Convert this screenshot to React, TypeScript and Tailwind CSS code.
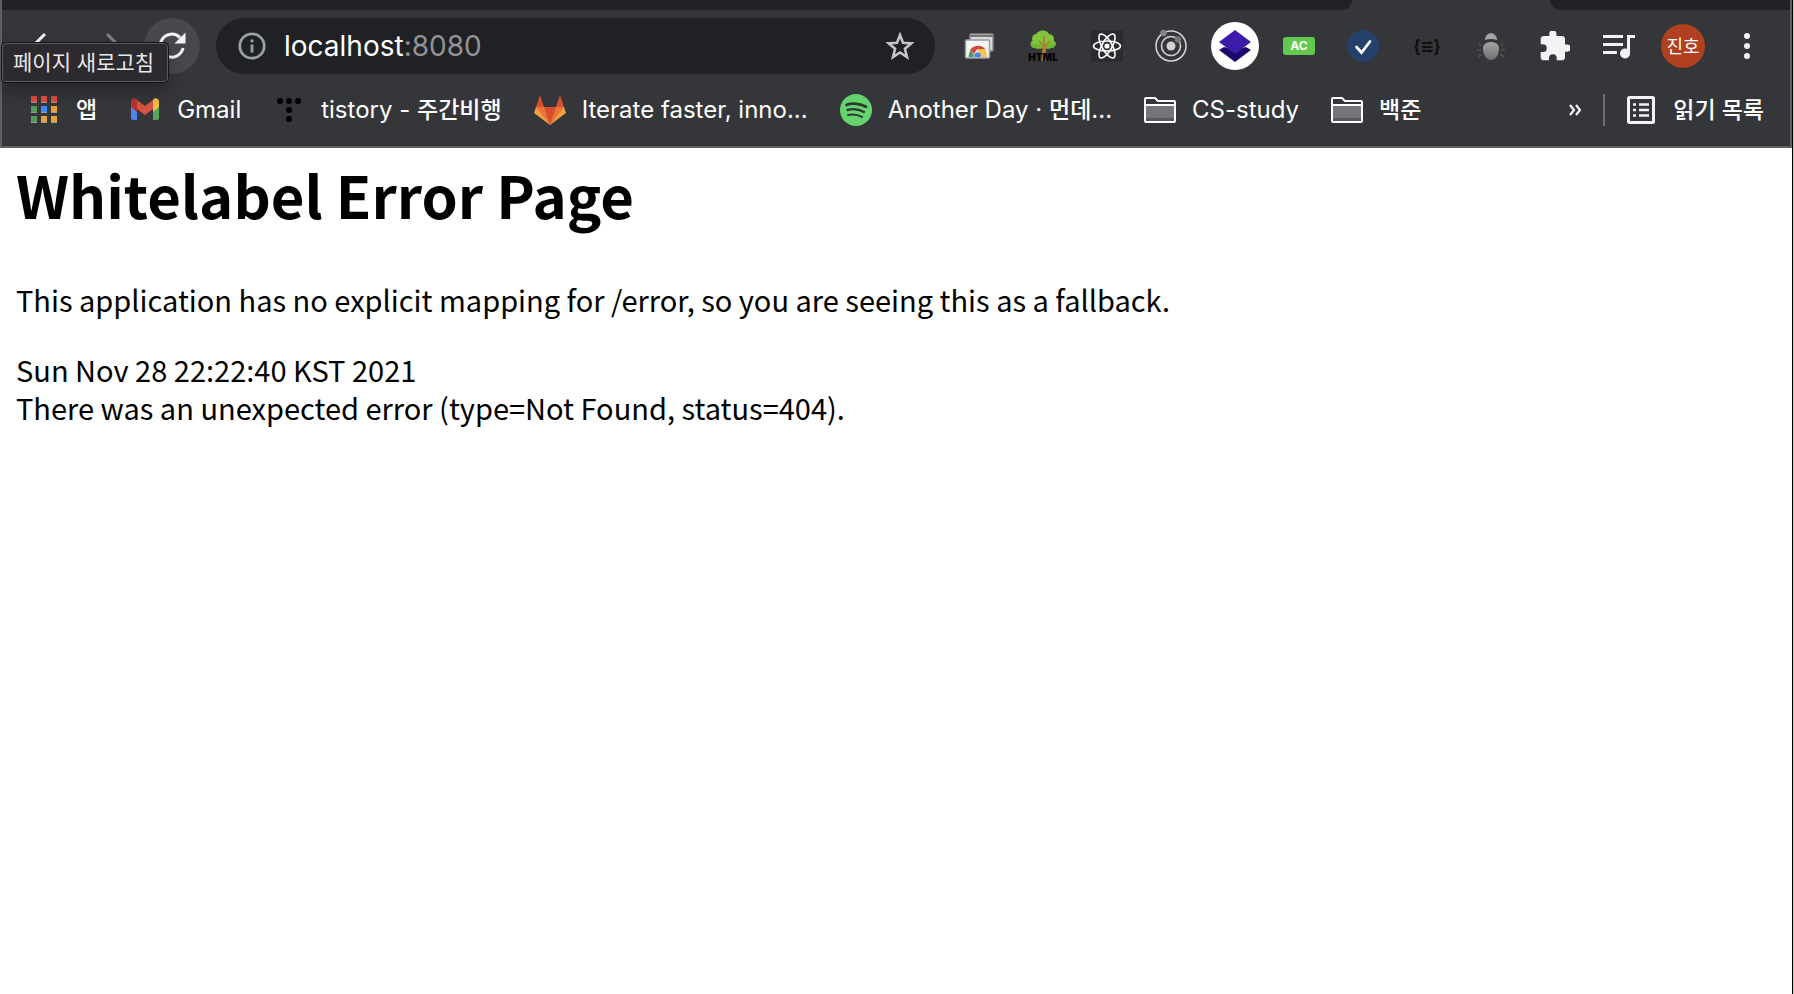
import { type ReactNode } from "react";

function Reload() {
  return (
    <svg viewBox="0 0 28 28" className="size-7" fill="none" stroke="#f1f3f4" strokeWidth="3">
      <path d="M25 16 A11.5 11.5 0 1 1 22 5.6" />
      <path d="M27.500 .5V11.500H16.500z" fill="#f1f3f4" stroke="none" />
    </svg>
  );
}

function Star() {
  return (
    <svg viewBox="0 0 30 30" className="size-[30px]" fill="none" stroke="#c4c5c8" strokeWidth="2.6">
      <path d="M15 4l3 7.800 8.300.6-6.400 5.300 2.100 8.300-7-4.500-7 4.500 2.100-8.300-6.400-5.300 8.300-.6z" />
    </svg>
  );
}

function Apps() {
  const colors = ["#e04a3f", "#e04a3f", "#e04a3f", "#4f9a5c", "#3f86f4", "#e5a336", "#4f9a5c", "#e5a336", "#e5a336"];
  return (
    <svg viewBox="0 0 26 28" className="h-7 w-[26px]">
      {colors.map((c, i) => (
        <g key={i}>
          <rect x={(i % 3) * 10} y={Math.floor(i / 3) * 10 + 1} width="6" height="6" fill="#9a9a9a" />
          <rect x={(i % 3) * 10} y={Math.floor(i / 3) * 10} width="6" height="6" fill={c} />
        </g>
      ))}
    </svg>
  );
}

function Gmail() {
  return (
    <svg viewBox="0 0 30 24" className="h-6 w-[30px]">
      <path d="M1 8v12a2 2 0 0 0 2 2h4V12z" fill="#4f86ec" />
      <path d="M29 8v12a2 2 0 0 1-2 2h-4V12z" fill="#58a65c" />
      <path d="M7 5v9L1 9V4C1 0 4.500-.5 7 1.500z" fill="#b5332a" />
      <path d="M23 5v9l6-5V4c0-4-3.500-4.500-6-2.500z" fill="#f1bc42" />
      <path d="M7 2l8 6 8-6v9l-8 6-8-6z" fill="#d95140" />
    </svg>
  );
}

function Tistory() {
  return (
    <svg viewBox="0 0 24 24" className="size-6" fill="#000">
      <circle cx="3" cy="3" r="3" />
      <circle cx="12" cy="3" r="3" />
      <circle cx="21" cy="3" r="3" />
      <circle cx="12" cy="12" r="3" />
      <circle cx="12" cy="21" r="3" />
    </svg>
  );
}

function Gitlab() {
  return (
    <svg viewBox="0 0 32 30" className="h-[30px] w-8">
      <path d="M16 30L0 18 2 12h28l2 6z" fill="#efa141" />
      <path d="M2 12h28L16 30z" fill="#ec7339" />
      <path d="M10 12h12l-6 18zM6 0l4 12H2zM26 0l4 12h-8z" fill="#d6502f" />
    </svg>
  );
}

function Spotify() {
  return (
    <svg viewBox="0 0 32 32" className="size-8" fill="none" stroke="#2d3a33" strokeLinecap="round">
      <circle cx="16" cy="16" r="16" fill="#65d46e" stroke="none" />
      <path d="M6.500 10.800c6-2 14-1.300 19.500 2" strokeWidth="2.800" />
      <path d="M7.500 16c5-1.500 11.500-.8 16.500 2" strokeWidth="2.400" />
      <path d="M8 21c5-1.200 9.500-.6 14 1.900" strokeWidth="2" />
    </svg>
  );
}

function Folder() {
  return (
    <svg viewBox="0 0 32 26" className="h-[26px] w-8">
      <path d="M1 8h30v16H1z" fill="#757679" />
      <path d="M2 21h28v3H2z" fill="#58595c" />
      <path d="M1 2a1 1 0 0 1 1-1h9l3 3h16a1 1 0 0 1 1 1v19a1 1 0 0 1-1 1H2a1 1 0 0 1-1-1zM1 8h30" fill="none" stroke="#fff" strokeWidth="2" />
    </svg>
  );
}

function ReadingList() {
  return (
    <svg viewBox="0 0 28 28" className="size-7" fill="none" stroke="#f1f3f4" strokeWidth="3">
      <rect x="1.500" y="1.500" width="25" height="25" rx="1" />
      <path d="M6 8.500h3M12 8.500h10M6 14h3M12 14h10M6 19.500h3M12 19.500h10" strokeWidth="2.600" />
    </svg>
  );
}

function Screens() {
  return (
    <svg viewBox="0 0 32 32" className="size-8">
      <rect x="7" y="4" width="23" height="17" rx="1" fill="#d9d9d9" stroke="#8b8b8b" strokeWidth="1.500" />
      <path d="M7 6h23" stroke="#777" strokeWidth="2" />
      <rect x="2.500" y="10" width="24" height="18" rx="1" fill="#f5f5f5" stroke="#9b9b9b" strokeWidth="1.500" />
      <path d="M5.500 27a9 11 0 0 1 2-7l5 7z" fill="#4a9f57" />
      <path d="M7 20c4-6 13-5 15.500-.5H14L11 24z" fill="#d0493c" />
      <path d="M15 19.500h7.500a11 11 0 0 1 1 7.500H16z" fill="#f3c74b" />
      <path d="M10.500 27a4 4 0 1 1 8 0z" fill="#fff" />
      <path d="M11.500 27a3.400 3.400 0 1 1 6.200 0z" fill="#4b83e8" />
    </svg>
  );
}

function Tree() {
  return (
    <svg viewBox="0 0 32 32" className="size-8 overflow-visible">
      <path d="M8 18c-4 0-6-5-2.500-7.500C4 6 7.500 3.500 9.500 4 11-.5 20-1 22 4c4 0 6 4 4.500 6.500C31 13 28 18 24 18c-2 1-5 .5-8 0-3 .5-6 1-8 0z" fill="#83c43d" />
      <path d="M8 18c-4 0-5-3-4-5 5 2 20 2 24.500 0 .5 2-1 5-4.500 5-2 1-5 .5-8 0-3 .5-6 1-8 0z" fill="#6fb538" />
      <path d="M17 6v25M17 17l6-6M17 16l-5-5" stroke="#b27a35" strokeWidth="1.600" fill="none" />
      <path d="M15.500 15h3l1 16h-5z" fill="#b27a35" />
      <text x="16" y="31" textAnchor="middle" fontSize="10" className="font-['Inter'] font-black" fill="#000">HTML</text>
    </svg>
  );
}

function ReactMark() {
  return (
    <svg viewBox="0 0 32 32" className="size-8" fill="none" stroke="#fff" strokeWidth="1.600">
      <rect width="32" height="32" rx="2" fill="#2b2b30" stroke="none" />
      <ellipse cx="16" cy="16" rx="13.500" ry="5" />
      <ellipse cx="16" cy="16" rx="13.500" ry="5" transform="rotate(60 16 16)" />
      <ellipse cx="16" cy="16" rx="13.500" ry="5" transform="rotate(120 16 16)" />
      <circle cx="16" cy="16" r="2.600" fill="#fff" stroke="none" />
    </svg>
  );
}

function Orbit() {
  return (
    <svg viewBox="0 0 32 32" className="size-8 overflow-visible" fill="none" stroke="#d2d2d3" strokeWidth="1.600">
      <circle cx="16" cy="16" r="15" />
      <circle cx="16" cy="16" r="9.500" />
      <circle cx="16" cy="16" r="4.500" fill="#d2d2d3" stroke="none" />
      <circle cx="8.500" cy="3" r="3.200" fill="#858689" stroke="none" />
      <circle cx="23" cy="9.500" r="3.200" fill="#77787b" stroke="none" />
    </svg>
  );
}

function Layers() {
  return (
    <svg viewBox="0 0 48 48" className="size-12">
      <circle cx="24" cy="24" r="24" fill="#fff" />
      <path d="M8 28l5-3 11 3 11-3 5 3-16 12z" fill="#1d0a6b" />
      <path d="M24 8l16 12-16 12L8 20z" fill="#3d1ba8" />
    </svg>
  );
}

function Check() {
  return (
    <svg viewBox="0 0 32 32" className="size-8">
      <circle cx="16" cy="16" r="16" fill="#23416b" />
      <path d="M9.500 17l5 5.500L23 11.500" fill="none" stroke="#fff" strokeWidth="2.800" strokeLinecap="round" />
    </svg>
  );
}

function Braces() {
  return (
    <svg viewBox="0 0 32 32" className="size-8" fill="none" stroke="#111" strokeWidth="2.400">
      <path d="M8.500 10C5.500 10 6 11.500 6 13.500s-.5 3.500-2.500 3.500C5.500 17 6 18.500 6 20.500s-.5 3.500 2.500 3.500M23.500 10c3 0 2.500 1.500 2.500 3.500s.5 3.500 2.500 3.500C26.500 17 26 18.500 26 20.500s.5 3.500-2.500 3.500" />
      <path d="M11 13h10.500M11 17h10.500M11 21h10.500" strokeWidth="1.800" />
      <path d="M18.500 11.500v3M13.500 15.500v3M18.500 19.500v3" strokeWidth="2" />
    </svg>
  );
}

function Bug() {
  return (
    <svg viewBox="0 0 32 32" className="size-8">
      <defs>
        <linearGradient id="bug-shell" x1="0" y1="0" x2="0" y2="1">
          <stop offset="0" stopColor="#a4a4a4" />
          <stop offset="1" stopColor="#6e6e6e" />
        </linearGradient>
      </defs>
      <path d="M6.500 15.500H5L4 13.500M6 20H2M7 25H4.500l-1 2.500M25.500 15.500H27l1-2M26 20h4M25 25h2.500l1 2.500" stroke="#505154" strokeWidth="1.500" fill="none" />
      <path d="M10 10c0-9 12-9 12 0-4-1.500-8-1.500-12 0z" fill="#a5a5a5" />
      <path d="M8 18c0-8 16-8 16 0s-4 12-8 12-8-4-8-12z" fill="url(#bug-shell)" />
    </svg>
  );
}

function Puzzle() {
  return (
    <svg viewBox="1.500 1.500 21 21" className="size-[30px]" fill="#f1f3f4">
      <path d="M20.500 11H19V7c0-1.100-.9-2-2-2h-4V3.500a2.500 2.500 0 0 0-5 0V5H4c-1.100 0-2 .9-2 2v3.800h1.500a2.700 2.700 0 0 1 0 5.400H2V20c0 1.100.9 2 2 2h3.800v-1.500a2.700 2.700 0 0 1 5.400 0V22H17c1.100 0 2-.9 2-2v-4h1.500a2.500 2.500 0 0 0 0-5z" />
    </svg>
  );
}

function Queue() {
  return (
    <svg viewBox="0 0 32 26" className="h-[26px] w-8" fill="none" stroke="#f1f3f4" strokeWidth="3">
      <path d="M0 3.500h20M0 11.500h20M0 19.500h14" />
      <path d="M25.500 20V3.500H32" />
      <circle cx="22" cy="20.500" r="5" fill="#f1f3f4" stroke="none" />
    </svg>
  );
}

function Info() {
  return (
    <svg viewBox="0 0 28 28" className="size-7 shrink-0" fill="none" stroke="#9aa0a6" strokeWidth="2.800">
      <circle cx="14" cy="14" r="12.200" />
      <path d="M14 12.500v8M14 7.500v2.800" />
    </svg>
  );
}

function Extension({ label, children }: { label: string; children: ReactNode }) {
  return (
    <button type="button" aria-label={label} className="flex h-12 w-16 shrink-0 items-center justify-center">
      {children}
    </button>
  );
}

function Bookmark({ icon, children }: { icon: ReactNode; children: ReactNode }) {
  return (
    <a href="#" className="flex h-14 shrink-0 items-center gap-4 whitespace-nowrap">
      <span className="flex w-8 justify-center">{icon}</span>
      <span>{children}</span>
    </a>
  );
}

function Ko({ children }: { children: ReactNode }) {
  return <span lang="ko" className="text-[23px] font-medium">{children}</span>;
}

export default function App() {
  return (
    <div className="border-r border-[#c9c9c4]">
      <div className="flex min-h-screen flex-col border-r border-black bg-white font-['Inter','Noto_Sans_CJK_KR',sans-serif]">
        <header className="border-x-2 border-b-2 border-[#5f5f63] bg-[#35363a] text-white">
          <div className="flex h-[10px]">
            <div className="w-[1350px] rounded-br-2xl bg-[#202124]" />
            <div className="w-[198px]" />
            <div className="grow rounded-bl-2xl bg-[#202124]" />
          </div>

          <div className="flex h-[72px] items-center pl-[14px] pr-[11px]">
            <nav aria-label="Navigation" className="relative flex shrink-0 items-center gap-2">
              <button type="button" aria-label="Back" className="flex size-14 items-center justify-center">
                <svg viewBox="0 0 28 28" className="size-7" fill="none" stroke="#f1f3f4" strokeWidth="3">
                  <path d="M15 2L3 14l12 12M3 14h24" />
                </svg>
              </button>
              <button type="button" aria-label="Forward" className="flex size-14 items-center justify-center">
                <svg viewBox="0 0 28 28" className="size-7" fill="none" stroke="#7e7f83" strokeWidth="3">
                  <path d="M13 2l12 12-12 12M25 14H1" />
                </svg>
              </button>
              <button type="button" aria-label="페이지 새로고침" aria-describedby="reload-tip" className="flex size-14 items-center justify-center rounded-full bg-[#47484c]">
                <Reload />
              </button>
              <div id="reload-tip" role="tooltip" className="absolute -left-[14px] top-[25px] flex h-[39px] w-[166px] items-center whitespace-nowrap rounded-sm border border-[#5b595f] bg-[#2c292f] pl-[10px] text-[21px] text-[#e8e8e8] shadow-[0_0_0_1px_#161618,0_8px_16px_rgba(0,0,0,0.3)]">
                페이지 새로고침
              </div>
            </nav>

            <div className="ml-4 flex h-14 min-w-0 grow items-center rounded-full bg-[#202124] pl-[22px] pr-5">
              <Info />
              <div className="ml-[18px] grow text-[28px]">
                localhost<span className="text-[#919396]">:8080</span>
              </div>
              <button type="button" aria-label="Bookmark this page"><Star /></button>
            </div>

            <div className="ml-3 flex shrink-0 items-center">
              <Extension label="Remote desktop"><Screens /></Extension>
              <Extension label="HTML tree"><Tree /></Extension>
              <Extension label="React tools"><ReactMark /></Extension>
              <Extension label="Orbit"><Orbit /></Extension>
              <Extension label="Layers"><Layers /></Extension>
              <Extension label="AC">
                <span className="flex h-[18px] w-8 items-center justify-center rounded-[3px] bg-[#62c84f] text-[12px] font-bold">AC</span>
              </Extension>
              <Extension label="Check"><Check /></Extension>
              <Extension label="JSON formatter"><Braces /></Extension>
              <Extension label="Bug reporter"><Bug /></Extension>
              <Extension label="Extensions"><Puzzle /></Extension>
              <Extension label="Media"><Queue /></Extension>
              <Extension label="Profile">
                <span className="flex size-11 items-center justify-center rounded-full bg-[#b04020] text-[18px]">진호</span>
              </Extension>
              <Extension label="Menu">
                <svg viewBox="0 0 6 26" className="h-[26px] w-[6px]" fill="#f1f3f4">
                  <circle cx="3" cy="3" r="3" />
                  <circle cx="3" cy="13" r="3" />
                  <circle cx="3" cy="23" r="3" />
                </svg>
              </Extension>
            </div>
          </div>

          <nav aria-label="Bookmarks" className="flex h-16 items-start gap-8 pl-[26px] pr-[26px] text-[24px]">
            <Bookmark icon={<Apps />}><Ko>앱</Ko></Bookmark>
            <Bookmark icon={<Gmail />}>Gmail</Bookmark>
            <Bookmark icon={<Tistory />}>tistory - <Ko>주간비행</Ko></Bookmark>
            <Bookmark icon={<Gitlab />}>Iterate faster, inno...</Bookmark>
            <Bookmark icon={<Spotify />}>Another Day · <Ko>먼데</Ko>...</Bookmark>
            <Bookmark icon={<Folder />}>CS-study</Bookmark>
            <Bookmark icon={<Folder />}><Ko>백준</Ko></Bookmark>
            <div className="ml-auto flex items-center">
              <button type="button" aria-label="More bookmarks" className="flex h-14 items-center">
                <svg viewBox="0 0 12 12" className="size-3" fill="none" stroke="#f1f3f4" strokeWidth="2.200">
                  <path d="M1 1l4 5-4 5M7 1l4 5-4 5" />
                </svg>
              </button>
              <span className="ml-[22px] mr-5 h-8 w-[2px] bg-[#6b6c70]" />
              <Bookmark icon={<ReadingList />}><Ko>읽기 목록</Ko></Bookmark>
            </div>
          </nav>
        </header>

        <main className="px-4 font-['Noto_Sans_CJK_KR',sans-serif] text-[29px] leading-[38px] text-black">
          <h1 className="mt-1 text-[58px] font-bold leading-[84px]">Whitelabel Error Page</h1>
          <p className="mt-11">This application has no explicit mapping for /error, so you are seeing this as a fallback.</p>
          <p className="mt-8">
            Sun Nov 28 22:22:40 KST 2021
            <br />
            There was an unexpected error (type=Not Found, status=404).
          </p>
        </main>
      </div>
    </div>
  );
}
